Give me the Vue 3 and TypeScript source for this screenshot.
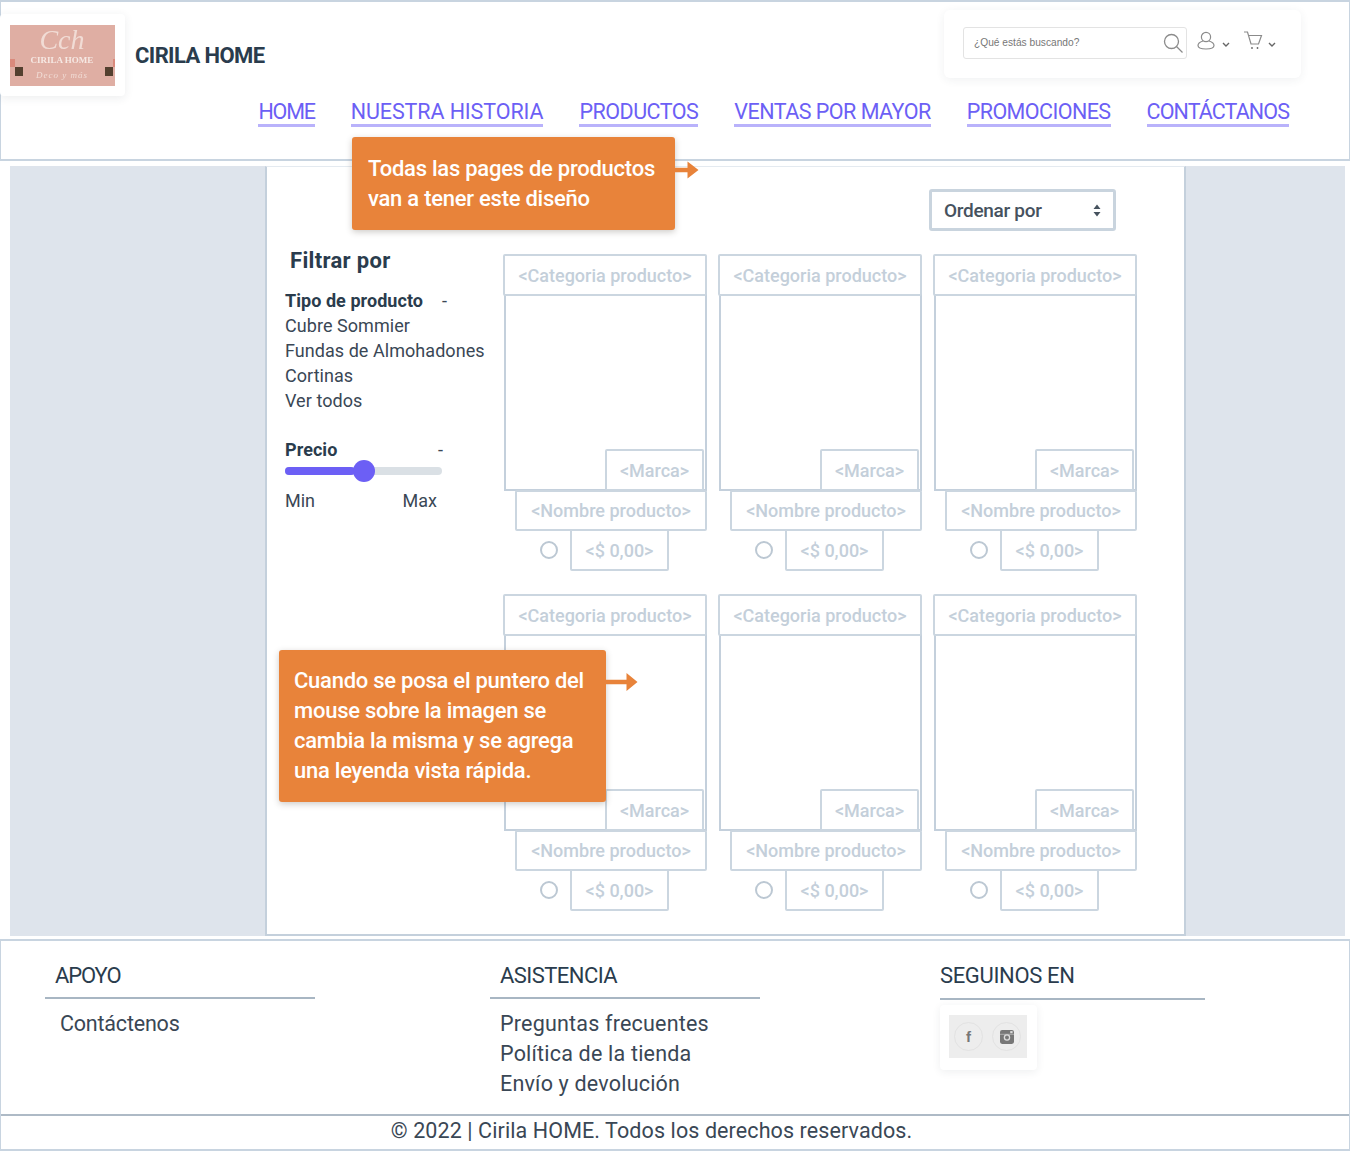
<script setup lang="ts">
interface NavItem { label: string; spacing: number }
const navItems: NavItem[] = [
  { label: 'HOME', spacing: -1.2 },
  { label: 'NUESTRA HISTORIA', spacing: -0.1 },
  { label: 'PRODUCTOS', spacing: -0.5 },
  { label: 'VENTAS POR MAYOR', spacing: -0.52 },
  { label: 'PROMOCIONES', spacing: -0.57 },
  { label: 'CONTÁCTANOS', spacing: -0.9 },
]
const filterTypes: string[] = ['Cubre Sommier', 'Fundas de Almohadones', 'Cortinas', 'Ver todos']
const cards: number[] = [1, 2, 3, 4, 5, 6]
const help: string[] = ['Preguntas frecuentes', 'Política de la tienda', 'Envío y devolución']
</script>

<template>
  <div class="page">
    <header class="header">
      <div class="top">
        <div class="brand">
          <div class="logo-card">
            <svg class="logo" width="105" height="61" viewBox="0 0 105 61">
              <rect width="105" height="61" fill="#dfaea3" />
              <rect x="0" y="34" width="5" height="8" fill="#da8a7c" />
              <rect x="103" y="34" width="2" height="8" fill="#da8a7c" />
              <rect x="5" y="42" width="8" height="9" fill="#54402f" />
              <rect x="95" y="42" width="8" height="9" fill="#54402f" />
              <text x="52" y="24" class="logo-script">Cch</text>
              <text x="52" y="38" class="logo-name">CIRILA HOME</text>
              <text x="52" y="53" class="logo-sub">Deco y más</text>
            </svg>
          </div>
          <div class="brand-name">CIRILA HOME</div>
        </div>
        <div class="tools">
          <div class="search">
            <span class="placeholder">¿Qué estás buscando?</span>
            <svg width="22" height="22" viewBox="0 0 22 22" fill="none" stroke="#8b8b8b" stroke-width="1.3">
              <circle cx="9.5" cy="9.5" r="7" />
              <path d="M14.5 14.5 L20.5 20.5" />
            </svg>
          </div>
          <svg class="icon-user" width="18" height="19" viewBox="0 0 18 19" fill="none" stroke="#8b8b8b" stroke-width="1.2">
            <circle cx="9" cy="6" r="4.6" />
            <path d="M6 10 C2.5 11 1 12.5 1 14.5 C1 17 4 18 9 18 C14 18 17 17 17 14.5 C17 12.5 15.5 11 12 10" />
          </svg>
          <svg class="chev chev-user" width="8" height="5" viewBox="0 0 8 5" fill="none" stroke="#666" stroke-width="1.4"><path d="M1 1 L4 4 L7 1" /></svg>
          <svg class="icon-cart" width="20" height="19" viewBox="0 0 20 19" fill="none" stroke="#8b8b8b" stroke-width="1.2">
            <path d="M1 1 H4.5 L8 13 H15.5 L18.5 4.5 H5.5" />
            <circle cx="9" cy="17" r=".9" fill="#666" stroke="none" />
            <circle cx="14.5" cy="17" r=".9" fill="#666" stroke="none" />
          </svg>
          <svg class="chev" width="8" height="5" viewBox="0 0 8 5" fill="none" stroke="#666" stroke-width="1.4"><path d="M1 1 L4 4 L7 1" /></svg>
        </div>
      </div>
      <nav class="nav">
        <a v-for="item in navItems" :key="item.label" class="nav-link" :style="{ letterSpacing: item.spacing + 'px' }">{{ item.label }}</a>
      </nav>
    </header>

    <main class="main">
      <section class="panel">
        <div class="toolbar">
          <div class="select">
            <span>Ordenar por</span>
            <svg width="8" height="13" viewBox="0 0 8 13" fill="#46525e"><path d="M4 0.5 L7.5 5 H0.5 Z M4 12.5 L0.5 8 H7.5 Z" /></svg>
          </div>
        </div>
        <div class="content">
          <aside class="filters">
            <h2 class="filter-title">Filtrar por</h2>
            <div class="filter-head type-head"><strong>Tipo de producto</strong><span>-</span></div>
            <div v-for="t in filterTypes" :key="t" class="filter-item">{{ t }}</div>
            <div class="filter-head price-head"><strong>Precio</strong><span>-</span></div>
            <div class="slider">
              <div class="slider-fill"></div>
              <div class="slider-thumb"></div>
            </div>
            <div class="range"><span>Min</span><span>Max</span></div>
          </aside>
          <div class="grid">
            <article v-for="c in cards" :key="c" class="card">
              <div class="box box-cat">&lt;Categoria producto&gt;</div>
              <div class="image">
                <div class="box box-brand">&lt;Marca&gt;</div>
              </div>
              <div class="box box-name">&lt;Nombre producto&gt;</div>
              <div class="price-row">
                <span class="radio"></span>
                <div class="box box-price">&lt;$ 0,00&gt;</div>
              </div>
            </article>
          </div>
        </div>
      </section>
    </main>

    <footer class="footer">
      <div class="foot-cols">
        <div class="col col-a">
          <h3 class="col-title">APOYO</h3>
          <div class="col-rule"></div>
          <div class="col-links links-a"><div>Contáctenos</div></div>
        </div>
        <div class="col col-b">
          <h3 class="col-title">ASISTENCIA</h3>
          <div class="col-rule"></div>
          <div class="col-links links-b"><div v-for="h in help" :key="h">{{ h }}</div></div>
        </div>
        <div class="col col-c">
          <h3 class="col-title">SEGUINOS EN</h3>
          <div class="col-rule"></div>
          <div class="social-card">
            <div class="social">
              <span class="social-ico"><span class="fb">f</span></span>
              <span class="social-ico">
                <svg width="14" height="14" viewBox="0 0 13 13">
                  <rect width="13" height="13" rx="2" fill="#777" />
                  <rect x="0" y="3.5" width="13" height="1" fill="#aaa" />
                  <circle cx="6.5" cy="7" r="3" fill="#ddd" />
                  <circle cx="6.5" cy="7" r="1.8" fill="#777" />
                  <rect x="9.5" y="1" width="2.2" height="2" fill="#ddd" />
                </svg>
              </span>
            </div>
          </div>
        </div>
      </div>
      <div class="copy">© 2022 | Cirila HOME. Todos los derechos reservados.</div>
    </footer>

    <div class="note note-a">Todas las pages de productos<br />van a tener este diseño</div>
    <svg class="arrow arrow-a" width="24" height="20" viewBox="0 0 24 20" fill="#e8833a"><path d="M0 7.8 H12.5 V1.5 L23.5 10 L12.5 18.5 V12.2 H0 Z" /></svg>
    <div class="note note-b">Cuando se posa el puntero del<br />mouse sobre la imagen se<br />cambia la misma y se agrega<br />una leyenda vista rápida.</div>
    <svg class="arrow arrow-b" width="32" height="20" viewBox="0 0 32 20" fill="#e8833a"><path d="M0 7.8 H20.5 V1 L31.5 10 L20.5 19 V12.2 H0 Z" /></svg>
  </div>
</template>

<style>
html, body { margin: 0; background: #fff; }
</style>

<style scoped>
* { box-sizing: border-box; }
.page {
  position: relative;
  width: 1350px;
  height: 1155px;
  background: #fff;
  font-family: Roboto, "Liberation Sans", sans-serif;
  color: #2c3e50;
  overflow: hidden;
}
.header {
  height: 161px;
  border: 1px solid #c8d4e0;
  border-bottom-width: 2px;
  border-top-width: 2px;
}
.top {
  display: flex;
  justify-content: space-between;
  align-items: flex-start;
  height: 96px;
}
.brand { display: flex; align-items: center; margin-top: 12px; margin-left: -1px; }
.logo-card {
  width: 125px;
  height: 82px;
  padding: 11px 0 0 10px;
  background: #fff;
  border-radius: 4px;
  box-shadow: 0 2px 10px rgba(40, 50, 70, .09);
}
.logo { display: block; filter: blur(.35px); }
.logo-script { font: italic 28px "Liberation Serif", serif; fill: #f1dcd5; text-anchor: middle; }
.logo-name { font: bold 9px "Liberation Serif", serif; fill: #f6e9e4; text-anchor: middle; }
.logo-sub { font: italic 9px "Liberation Serif", serif; fill: #f1dcd5; text-anchor: middle; letter-spacing: 1px; }
.brand-name {
  margin-left: 10px;
  margin-top: 1px;
  font-size: 22px;
  font-weight: 700;
  letter-spacing: -.6px;
  color: #2a3c4d;
}
.tools {
  display: flex;
  align-items: center;
  width: 357px;
  height: 68px;
  margin: 8px 48px 0 0;
  padding: 0 0 2px 19px;
  background: #fff;
  border-radius: 6px;
  box-shadow: 0 2px 10px rgba(40, 50, 70, .07);
}
.search {
  display: flex;
  align-items: center;
  justify-content: space-between;
  width: 224px;
  height: 32px;
  padding: 0 2px 0 10px;
  border: 1px solid #e3e3e3;
  border-radius: 3px;
}
.placeholder { font: 10.2px "Liberation Sans", sans-serif; color: #777; margin-top: -2px; }
.icon-user { margin-left: 10px; margin-top: -6px; }
.chev { margin: 2px 0 0 5px; }
.chev-user { margin-left: 7px; }
.icon-cart { margin-left: 13px; margin-top: -5px; }
.nav {
  display: flex;
  justify-content: flex-end;
  gap: 36px;
  padding-right: 60px;
}
.nav-link {
  display: block;
  height: 29px;
  font-size: 21.5px;
  line-height: 28px;
  color: #6c5ff5;
  border-bottom: 3px solid #b9b2fb;
}
.main {
  margin: 5px 5px 0 10px;
  height: 770px;
  background: #dee4ec;
  display: flex;
  justify-content: flex-start;
}
.panel {
  height: 770px;
  margin-left: 255px;
  width: 921px;
  background: #fff;
  border: 2px solid #c4d0dc;
  border-top: 1px solid #e4eaf0;
}
.toolbar { display: flex; justify-content: flex-end; padding: 22px 68px 0 0; }
.select {
  display: flex;
  align-items: center;
  justify-content: space-between;
  width: 187px;
  height: 42px;
  padding: 0 12px 0 12px;
  border: 3px solid #c9d4de;
  border-radius: 3px;
  font-size: 19px;
  font-weight: 500;
  letter-spacing: -.3px;
  color: #46525e;
}
.content { display: flex; margin-top: 23px; }
.filters { width: 236px; padding-left: 18px; color: #3a4755; }
.filter-title {
  margin: -8px 0 0 5px;
  font-size: 22px;
  line-height: 30px;
  font-weight: 700;
  letter-spacing: .33px;
  color: #2a3c4d;
}
.filter-head { display: flex; justify-content: space-between; width: 162px; font-size: 18px; line-height: 25px; }
.filter-head strong { font-weight: 700; letter-spacing: .05px; color: #2a3c4d; }
.type-head { margin-top: 12px; }
.filter-item { font-size: 18px; line-height: 25px; letter-spacing: .05px; white-space: nowrap; }
.price-head { width: 158px; margin-top: 24px; }
.slider { position: relative; width: 157px; height: 8px; margin-top: 5px; border-radius: 4px; background: #dae0e5; }
.slider-fill { width: 70px; height: 8px; border-radius: 4px; background: #6c5ff5; }
.slider-thumb { position: absolute; left: 68px; top: -7px; width: 22px; height: 22px; border-radius: 50%; background: #6c5ff5; }
.range { display: flex; justify-content: space-between; width: 152px; margin-top: 13px; font-size: 18px; line-height: 25px; }
.grid {
  display: grid;
  grid-template-columns: repeat(3, 205px);
  column-gap: 10px;
  row-gap: 23px;
}
.card { height: 317px; }
.box {
  display: flex;
  align-items: center;
  justify-content: center;
  border: 2px solid #cbd6e0;
  border-radius: 2px;
  font-size: 18px;
  font-weight: 500;
  letter-spacing: 0;
  color: #c4cfda;
  background: #fff;
  white-space: nowrap;
}
.box-cat { position: relative; z-index: 1; width: 204px; height: 42px; }
.image {
  display: flex;
  align-items: flex-end;
  justify-content: flex-end;
  width: 203px;
  height: 197px;
  margin: -2px 0 0 1px;
  padding-right: 1px;
  border: 2px solid #c4d0dc;
  border-top: 0;
}
.box-brand { width: 99px; height: 42px; margin-bottom: -2px; }
.box-name { width: 192px; height: 41px; margin-left: 12px; margin-top: -1px; }
.price-row { display: flex; align-items: center; margin-top: -2px; }
.radio { width: 18px; height: 18px; margin-left: 37px; border: 2px solid #bcc8d3; border-radius: 50%; }
.box-price { width: 99px; height: 42px; margin-left: 12px; }
.footer {
  margin-top: 3px;
  height: 212px;
  border: 1px solid #c8d4e0;
  border-top-width: 2px;
  border-bottom-width: 2px;
}
.foot-cols {
  display: grid;
  grid-template-columns: 489px 450px 1fr;
  height: 175px;
  border-bottom: 2px solid #aebac6;
}
.col { padding-top: 21px; }
.col-a { padding-left: 44px; }
.col-title {
  margin: 0 0 0 10px;
  font-size: 22px;
  line-height: 28px;
  font-weight: 400;
  letter-spacing: -.35px;
  color: #2a3c4d;
}
.col-a .col-title { letter-spacing: -1.1px; }
.col-b .col-title { letter-spacing: -.55px; }
.col-c .col-title { margin-left: 0; }
.col-rule { width: 270px; height: 2px; margin-top: 7px; background: #a8b6c3; }
.col-c .col-rule { width: 265px; margin-top: 8px; }
.col-links { font-size: 21.5px; line-height: 30px; letter-spacing: .2px; color: #3a4755; }
.links-a { margin: 10px 0 0 15px; letter-spacing: -.2px; }
.links-b { margin: 10px 0 0 10px; }
.social-card {
  width: 97px;
  height: 65px;
  margin-top: 5px;
  padding: 10px 0 0 9px;
  border-radius: 4px;
  box-shadow: 0 2px 8px rgba(40, 50, 70, .08);
}
.social {
  display: flex;
  align-items: center;
  gap: 9px;
  width: 78px;
  height: 43px;
  padding-left: 5px;
  background: #ededed;
}
.social-ico {
  display: flex;
  align-items: center;
  justify-content: center;
  width: 29px;
  height: 29px;
  border: 1px solid #e2e2e2;
  border-radius: 50%;
}
.fb { font: bold 15px "Liberation Sans", sans-serif; color: #777; }
.copy {
  text-align: center;
  font-size: 21.5px;
  line-height: 29px;
  letter-spacing: .1px;
  color: #3a4755;
  padding-right: 47px;
}
.note {
  position: absolute;
  padding: 0 15px;
  background: #e8833a;
  border-radius: 3px;
  box-shadow: 0 2px 6px rgba(60, 50, 40, .25);
  color: #fff;
  font-size: 22px;
  line-height: 30px;
  font-weight: 500;
  letter-spacing: -.25px;
  white-space: nowrap;
}
.note-a { left: 352px; top: 137px; width: 323px; height: 93px; padding-top: 17px; padding-left: 16px; }
.note-b { left: 279px; top: 650px; width: 327px; height: 152px; padding-top: 16px; }
.arrow { position: absolute; }
.arrow-a { left: 675px; top: 160px; }
.arrow-b { left: 606px; top: 672px; }
</style>
